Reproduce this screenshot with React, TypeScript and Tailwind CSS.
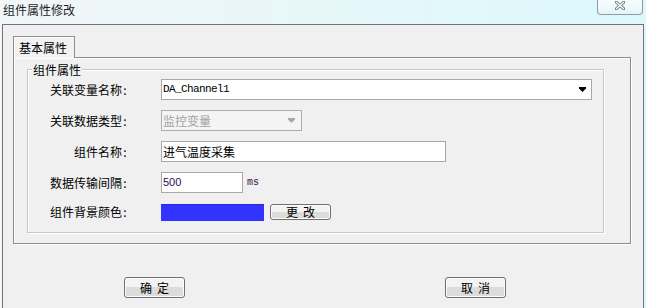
import React from "react";

const labelCls = "w-[100px] shrink-0 text-right text-[12px] leading-[16px] text-black";

const Row: React.FC<{ label: string; h?: string; children: React.ReactNode }> = ({ label, h = "h-[21px]", children }) => (
  <div className={`flex items-center ${h}`}>
    <div className={labelCls}>
      {label}
      <span className="inline-block w-[6px] text-center">:</span>
    </div>
    <div className="ml-[33px] flex items-center">{children}</div>
  </div>
);

const Arrow: React.FC<{ color: string }> = ({ color }) => (
  <svg width="7" height="5" viewBox="0 0 7 5">
    <path d="M0 0h7v1.5L3.5 5 0 1.5z" fill={color} />
  </svg>
);

const WinButton: React.FC<{ chars: [string, string]; cls: string }> = ({ chars, cls }) => (
  <button
    className={`${cls} flex items-center justify-center gap-[5px] rounded-[3px] border border-[#707070] bg-gradient-to-b from-[#f3f3f3] from-50% to-[#dcdcdc] to-50% text-[12px] text-black shadow-[inset_0_0_0_1px_#fcfcfc]`}
  >
    <span>{chars[0]}</span>
    <span>{chars[1]}</span>
  </button>
);

export default function App() {
  return (
    <div className="flex h-[308px] w-[646px] flex-col overflow-hidden bg-gradient-to-r from-[#f1f6f8] to-[#dcf8fb] font-['Noto_Sans_CJK_SC',sans-serif]">
      {/* title bar */}
      <div className="flex h-[24px] shrink-0 items-start">
        <span className="pl-[3px] text-[12px] leading-[20px] text-[#1e1e1e]">组件属性修改</span>
        <div className="ml-auto mr-[3px] flex h-[15px] w-[46px] items-center justify-center rounded-b-[4px] border border-t-0 border-[#8f9ca6] bg-gradient-to-b from-[#f7fdfe] to-[#e6f5f8]">
          <svg width="10" height="9" viewBox="0 0 10 9" className="mb-[3px]">
            <path d="M1 1l8 7M9 1l-8 7" stroke="#6f7b82" strokeWidth="3" strokeLinecap="square" fill="none" />
            <path d="M1 1l8 7M9 1l-8 7" stroke="#ffffff" strokeWidth="1.2" fill="none" />
          </svg>
        </div>
      </div>

      {/* window body */}
      <div className="mx-[2px] flex flex-1 flex-col border border-b-0 border-[#6e767c] bg-[#f0f0f0]">
        {/* tab header */}
        <div className="pl-[10px] pt-[11px]">
          <div className="relative z-10 -mb-px flex h-[22px] w-[62px] items-center border border-b-0 border-[#898c95] bg-[#f2f2f2] pl-[5px] text-[12px] leading-[16px] text-black shadow-[inset_1px_1px_0_#fff]">
            基本属性
          </div>
        </div>

        {/* tab panel */}
        <div className="ml-[10px] h-[187px] w-[618px] border border-[#898c95] bg-[#f0f0f0] pl-[13px] pt-[11px] shadow-[inset_1px_1px_0_#fff,1px_1px_0_#fff]">
          <div className="relative h-[164px] w-[577px] border border-[#c9c9c9] pt-[9px] shadow-[inset_1px_1px_0_#fff,1px_1px_0_#fff]">
            <span className="absolute left-[4px] top-[-7px] bg-[#f0f0f0] px-[1px] text-[12px] leading-[14px] text-black">
              组件属性
            </span>

            <div className="flex flex-col gap-[10px]">
              <Row label="关联变量名称">
                <div className="flex h-[21px] w-[431px] items-center justify-between border border-[#a9a9a9] bg-white pl-[1px] pr-[5px]">
                  <span className="font-['Liberation_Mono',monospace] text-[11px] tracking-[-0.6px] text-black">DA_Channel1</span>
                  <Arrow color="#000" />
                </div>
              </Row>

              <Row label="关联数据类型">
                <div className="flex h-[21px] w-[141px] items-center justify-between border border-[#adadad] bg-[#f4f4f4] pl-[1px] pr-[6px]">
                  <span className="text-[12px] text-[#a3a3a3]">监控变量</span>
                  <Arrow color="#a8a8a8" />
                </div>
              </Row>

              <Row label="组件名称">
                <div className="flex h-[21px] w-[285px] items-center border border-[#a9a9a9] bg-white pl-[1px]">
                  <span className="text-[12px] text-black">进气温度采集</span>
                </div>
              </Row>

              <Row label="数据传输间隔">
                <div className="flex h-[21px] w-[82px] items-center border border-[#a9a9a9] bg-white pl-[1px]">
                  <span className="font-['Liberation_Sans',sans-serif] text-[11px] text-[#1f1050]">500</span>
                </div>
                <span className="ml-[4px] font-['Liberation_Mono',monospace] text-[10px] text-[#3c0f46]">ms</span>
              </Row>

              <Row label="组件背景颜色" h="h-[18px]">
                <div className="h-[17px] w-[103px] border-t border-[#2a2ad0] bg-[#3333ff]" />
                <WinButton chars={["更", "改"]} cls="ml-[6px] h-[16px] w-[61px] leading-[14px]" />
              </Row>
            </div>
          </div>
        </div>

        {/* footer buttons */}
        <div className="ml-[121px] mt-[33px] flex">
          <WinButton chars={["确", "定"]} cls="h-[21px] w-[61px]" />
          <WinButton chars={["取", "消"]} cls="ml-[260px] h-[21px] w-[61px]" />
        </div>
      </div>
    </div>
  );
}
